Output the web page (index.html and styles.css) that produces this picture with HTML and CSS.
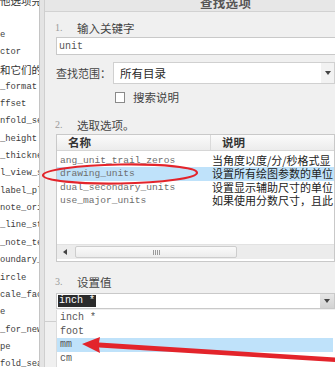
FILE: index.html
```html
<!DOCTYPE html>
<html>
<head>
<meta charset="utf-8">
<link rel="stylesheet" href="styles.css">
</head>
<body>
<div class="screen">
  <div class="left">
    <div class="lrow cjk">他选项完</div>
    <div class="lrow"></div>
    <div class="lrow">e</div>
    <div class="lrow">ctor</div>
    <div class="lrow cjk">和它们的</div>
    <div class="lrow">_format</div>
    <div class="lrow">ffset</div>
    <div class="lrow">nfold_se</div>
    <div class="lrow">_height</div>
    <div class="lrow">_thickne</div>
    <div class="lrow">l_view_s</div>
    <div class="lrow">label_pl</div>
    <div class="lrow">note_ori</div>
    <div class="lrow">_line_st</div>
    <div class="lrow">_note_te</div>
    <div class="lrow">oundary_</div>
    <div class="lrow">ircle</div>
    <div class="lrow">cale_fac</div>
    <div class="lrow">e</div>
    <div class="lrow">_for_new</div>
    <div class="lrow">pe</div>
    <div class="lrow">fold_seam</div>
  </div>
  <div class="strip"></div>
  <div class="dialog">
    <div class="titlebar"><div class="title">查找选项</div></div>
    <div class="content">
      <div class="step s1"><span class="num">1.</span><span class="slabel">输入关键字</span></div>
      <div class="input"><span class="mono">unit</span></div>
      <div class="scope">
        <span class="scope-label">查找范围：</span>
        <div class="select">
          <span class="select-text">所有目录</span>
          <span class="select-btn"><span class="tri"></span></span>
        </div>
      </div>
      <div class="check-row">
        <span class="checkbox"></span><span class="check-label">搜索说明</span>
      </div>
      <div class="step s2"><span class="num">2.</span><span class="slabel">选取选项。</span></div>
      <div class="listbox">
        <div class="lhead">
          <div class="hcol1">名称</div>
          <div class="hcol2">说明</div>
        </div>
        <div class="lbody">
          <div class="item"><div class="c1">ang_unit_trail_zeros</div><div class="c2">当角度以度/分/秒格式显</div></div>
          <div class="item sel"><div class="c1">drawing_units</div><div class="c2">设置所有绘图参数的单位</div></div>
          <div class="item"><div class="c1">dual_secondary_units</div><div class="c2">设置显示辅助尺寸的单位</div></div>
          <div class="item"><div class="c1">use_major_units</div><div class="c2">如果使用分数尺寸，且此</div></div>
        </div>
        <div class="hscroll">
          <div class="sbtn"><span class="ltri"></span></div>
          <div class="track">
            <div class="thumb"><span class="grip"></span></div>
          </div>
        </div>
      </div>
      <div class="step s3"><span class="num">3.</span><span class="slabel">设置值</span></div>
      <div class="combo">
        <span class="combo-text"><span class="hl">inch *</span></span>
        <span class="combo-btn"><span class="tri"></span></span>
      </div>
    </div>
    <div class="sep"></div>
  </div>
  <div class="popup">
    <div class="pitem">inch *</div>
    <div class="pitem">foot</div>
    <div class="pitem psel">mm</div>
    <div class="pitem">cm</div>
  </div>
  <svg class="marks" width="335" height="367" viewBox="0 0 335 367">
    <ellipse cx="120" cy="174" rx="77" ry="9.5" fill="none" stroke="#e3242b" stroke-width="2.2" transform="rotate(-1 120 174)"/>
    <polygon points="82,344 100,337 99,342.5 335,357.5 335,362 99,347.5 100,353" fill="#e3242b"/>
  </svg>
</div>
</body>
</html>
```

FILE: styles.css
```css
html, body {
  margin: 0;
  padding: 0;
  width: 335px;
  height: 367px;
  overflow: hidden;
  background: #f0f0f0;
}
.screen {
  position: relative;
  display: flex;
  width: 335px;
  height: 367px;
  overflow: hidden;
  font-family: "Noto Sans CJK SC", "Noto Sans", sans-serif;
}
.left {
  width: 39px;
  flex: none;
  background: #ffffff;
  border-right: 1px solid #c4c4c4;
  overflow: hidden;
  display: flex;
  flex-direction: column;
}
.lrow {
  height: 17.35px;
  line-height: 17.35px;
  flex: none;
  white-space: nowrap;
  font-family: "Liberation Mono", "DejaVu Sans Mono", monospace;
  font-size: 8.8px;
  color: #3c3c3c;
}
.lrow:first-child { margin-top: -8px; }
.lrow.cjk {
  font-family: "Noto Sans CJK SC", sans-serif;
  font-size: 10.5px;
  color: #333;
}
.strip {
  width: 4px;
  flex: none;
  background: #e4e4e4;
}
.dialog {
  flex: 1;
  min-width: 0;
  border-left: 1px solid #cfcfcf;
  background: #f0f0f0;
  display: flex;
  flex-direction: column;
}
.titlebar {
  height: 11px;
  border-bottom: 1px solid #d2d2d2;
  background: #e7e7e7;
  overflow: hidden;
}
.title {
  margin-top: -5px;
  padding-left: 155px;
  line-height: 16px;
  font-size: 12.5px;
  font-weight: bold;
  color: #555;
  letter-spacing: 0.3px;
}
.content {
  padding-left: 11px;
  display: flex;
  flex-direction: column;
}
.step {
  height: 14px;
  line-height: 14px;
  display: flex;
  align-items: center;
}
.s1 { margin-top: 9px; }
.s2 { margin-top: 14px; }
.s3 { margin-top: 13px; }
.num {
  width: 22px;
  margin-left: -1px;
  font-family: "Liberation Serif", serif;
  font-size: 10px;
  color: #9a9a9a;
}
.slabel {
  font-size: 11.5px;
  color: #444;
}
.input {
  margin-top: 2px;
  height: 16px;
  border: 1px solid #c9c9c9;
  border-right: none;
  background: #fff;
  display: flex;
  align-items: center;
  padding-left: 2px;
}
.mono {
  font-family: "Liberation Mono", "DejaVu Sans Mono", monospace;
  font-size: 10px;
  color: #555;
}
.scope {
  margin-top: 7px;
  height: 22px;
  display: flex;
  align-items: center;
}
.scope-label {
  width: 57px;
  font-size: 11px;
  color: #444;
}
.select {
  flex: 1;
  height: 20px;
  border: 1px solid #d0d0d0;
  background: #fff;
  display: flex;
  align-items: center;
}
.select-text {
  flex: 1;
  padding-left: 6px;
  font-size: 11.5px;
  color: #2a2a2a;
}
.select-btn {
  width: 13px;
  height: 20px;
  background: #f2f2f2;
  display: flex;
  align-items: center;
  justify-content: center;
}
.tri {
  width: 0;
  height: 0;
  border-left: 3.5px solid transparent;
  border-right: 3.5px solid transparent;
  border-top: 4px solid #444;
}
.check-row {
  margin-top: 6px;
  height: 14px;
  display: flex;
  align-items: center;
  padding-left: 59px;
}
.checkbox {
  width: 8px;
  height: 9px;
  border: 1px solid #8a8a8a;
  background: #fff;
}
.check-label {
  margin-left: 8px;
  font-size: 11.5px;
  color: #444;
}
.listbox {
  margin-top: 2px;
  height: 126px;
  border: 1px solid #c9c9c9;
  background: #fff;
  display: flex;
  flex-direction: column;
}
.lhead {
  height: 15px;
  border-bottom: 1px solid #d6d6d6;
  background: linear-gradient(#fbfbfb, #ececec);
  display: flex;
  font-size: 11.5px;
  font-weight: bold;
  color: #333;
  line-height: 15px;
}
.hcol1 {
  width: 142px;
  flex: none;
  padding-left: 11px;
  border-right: 1px solid #dadada;
}
.hcol2 {
  padding-left: 11px;
}
.lbody {
  flex: 1;
  padding-top: 3px;
}
.item {
  height: 13.3px;
  line-height: 13.3px;
  display: flex;
  white-space: nowrap;
}
.item.sel { background: #bfe2fa; }
.c1 {
  width: 151px;
  flex: none;
  padding-left: 3px;
  font-family: "Liberation Mono", "DejaVu Sans Mono", monospace;
  font-size: 9.6px;
  color: #6e6e6e;
  overflow: hidden;
}
.c2 {
  flex: 1;
  min-width: 0;
  padding-left: 1px;
  font-size: 11px;
  color: #222;
  overflow: hidden;
}
.hscroll {
  height: 14px;
  margin-bottom: 2px;
  display: flex;
  background: #ececec;
  border-top: 1px solid #e2e2e2;
}
.sbtn {
  width: 15px;
  display: flex;
  align-items: center;
  justify-content: center;
}
.ltri {
  width: 0;
  height: 0;
  border-top: 3.5px solid transparent;
  border-bottom: 3.5px solid transparent;
  border-right: 4px solid #444;
}
.track {
  flex: 1;
  padding: 1px 0 1px 3px;
  display: flex;
}
.thumb {
  width: 160px;
  border: 1px solid #cdcdcd;
  border-radius: 2px;
  background: linear-gradient(#fafafa, #ececec);
  display: flex;
  align-items: center;
  justify-content: center;
}
.grip {
  width: 7px;
  height: 5px;
  background: repeating-linear-gradient(90deg, #9a9a9a 0 1px, transparent 1px 2px);
}
.combo {
  margin-top: 4px;
  height: 14px;
  border: 1px solid #c9c9c9;
  background: #fff;
  display: flex;
  align-items: center;
}
.combo-text {
  flex: 1;
  padding-left: 1px;
  display: flex;
  align-items: center;
}
.hl {
  background: #2b2b2b;
  color: #fff;
  font-family: "Liberation Mono", "DejaVu Sans Mono", monospace;
  font-size: 10px;
  line-height: 12px;
  padding: 0 1px;
}
.combo-btn {
  width: 14px;
  height: 14px;
  background: linear-gradient(#e6e6e6, #d2d2d2);
  display: flex;
  align-items: center;
  justify-content: center;
}
.sep {
  margin-top: 12px;
  border-top: 1px solid #cfcfcf;
}
.popup {
  position: absolute;
  left: 56px;
  top: 310px;
  width: 279px;
  height: 60px;
  background: #fff;
  border-left: 1px solid #dcdcdc;
  padding-top: 1px;
}
.pitem {
  height: 13.5px;
  line-height: 13.5px;
  padding-left: 3px;
  font-family: "Liberation Mono", "DejaVu Sans Mono", monospace;
  font-size: 10px;
  color: #555;
}
.pitem.psel {
  background: #bfe2fa;
  margin-right: 3px;
}
.marks {
  position: absolute;
  left: 0;
  top: 0;
  pointer-events: none;
}
```
